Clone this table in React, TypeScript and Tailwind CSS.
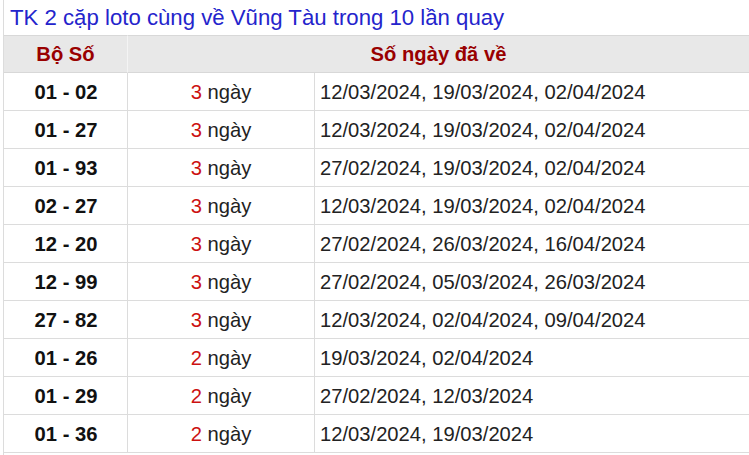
import React from "react";

const rows: { pair: string; count: number; dates: string }[] = [
  { pair: "01 - 02", count: 3, dates: "12/03/2024, 19/03/2024, 02/04/2024" },
  { pair: "01 - 27", count: 3, dates: "12/03/2024, 19/03/2024, 02/04/2024" },
  { pair: "01 - 93", count: 3, dates: "27/02/2024, 19/03/2024, 02/04/2024" },
  { pair: "02 - 27", count: 3, dates: "12/03/2024, 19/03/2024, 02/04/2024" },
  { pair: "12 - 20", count: 3, dates: "27/02/2024, 26/03/2024, 16/04/2024" },
  { pair: "12 - 99", count: 3, dates: "27/02/2024, 05/03/2024, 26/03/2024" },
  { pair: "27 - 82", count: 3, dates: "12/03/2024, 02/04/2024, 09/04/2024" },
  { pair: "01 - 26", count: 2, dates: "19/03/2024, 02/04/2024" },
  { pair: "01 - 29", count: 2, dates: "27/02/2024, 12/03/2024" },
  { pair: "01 - 36", count: 2, dates: "12/03/2024, 19/03/2024" },
];

const App = () => {
  return (
    <div className="w-[749px] h-[455px] overflow-hidden bg-white pl-[3px] font-['Liberation_Sans',Arial,sans-serif]">
      <div className="h-full border-l border-[#dcdcdc]">
        <div className="h-[35px] pl-[6px] text-[22.2px] leading-[35px] text-[#2424cc]">
          TK 2 cặp loto cùng về Vũng Tàu trong 10 lần quay
        </div>
        <div className="grid grid-cols-[124px_187px_1fr] text-[20.2px]">
          <div className="h-[38px] bg-[#e8e8e8] border-t border-b border-[#d8d8d8] border-r border-r-[#f4f4f4] flex items-center justify-center pt-[1px] font-bold text-[#990000]">
            Bộ Số
          </div>
          <div className="col-span-2 h-[38px] bg-[#e8e8e8] border-t border-b border-[#d8d8d8] flex items-center justify-center pt-[1px] font-bold text-[#990000]">
            Số ngày đã về
          </div>
          {rows.map((r, i) => (
            <React.Fragment key={i}>
              <div className="h-[38px] border-b border-r border-[#dcdcdc] flex items-center justify-center pt-[1px] pl-[1px] font-bold text-[#111]">
                {r.pair}
              </div>
              <div className="h-[38px] border-b border-r border-[#dcdcdc] flex items-center justify-center pt-[1px] text-[#222]">
                <span className="text-[#cc1111]">{r.count}</span>&nbsp;ngày
              </div>
              <div className="h-[38px] border-b border-[#dcdcdc] flex items-center pl-[5px] pt-[1px] text-[#222]">
                {r.dates}
              </div>
            </React.Fragment>
          ))}
        </div>
      </div>
    </div>
  );
};

export default App;
